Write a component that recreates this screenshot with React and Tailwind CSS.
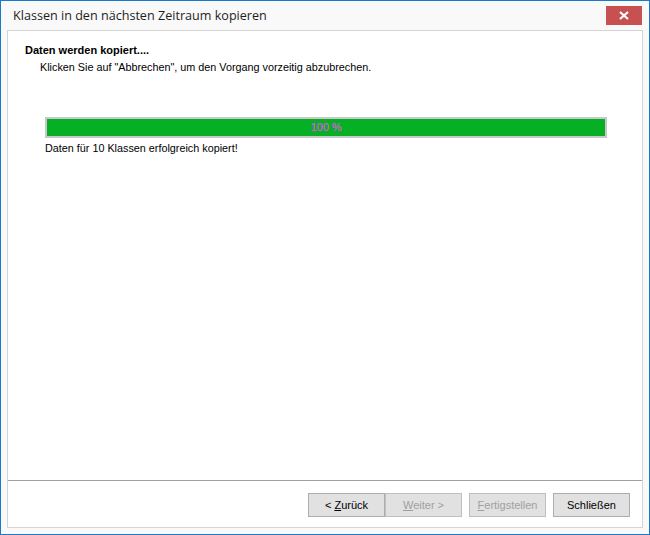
import React from "react";

const body = { fontFamily: '"Liberation Sans", Arial, sans-serif' };
const title = { fontFamily: '"Open Sans", "Noto Sans", sans-serif' };

function Btn({ children, disabled }) {
  return (
    <div
      className={`w-[77px] h-[24px] flex items-center justify-center border text-[11px] ${
        disabled ? "border-[#bfbfbf] text-[#a0a0a0]" : "border-[#adadad] text-[#000]"
      } bg-[#e1e1e1]`}
      style={body}
    >
      <span className="whitespace-pre">{children}</span>
    </div>
  );
}

export default function App() {
  return (
    <div className="w-[650px] h-[535px] border border-[#1979ca] bg-[#f9f9f9] flex flex-col">
      <div className="h-[29px] flex items-start justify-between pl-[12px] pr-[7px]">
        <div className="text-[12.6px] text-[#1e1e1e] mt-[5px] leading-[20px]" style={title}>
          Klassen in den nächsten Zeitraum kopieren
        </div>
        <div className="mt-[5px] w-[36px] h-[19px] bg-[#c75050] flex items-center justify-center">
          <svg width="10" height="9" viewBox="0 0 10 9">
            <path d="M1 1 L9 8 M9 1 L1 8" stroke="#fff" strokeWidth="2.2" />
          </svg>
        </div>
      </div>
      <div className="mx-[6px] mb-[6px] flex-1 border border-[#d4d4d4] bg-white flex flex-col" style={body}>
        <div className="flex-1 flex flex-col">
          <div className="pl-[17px] pt-[12px] text-[11px] leading-[14px] font-bold text-black">
            Daten werden kopiert....
          </div>
          <div className="pl-[32px] pt-[3px] text-[10.8px] leading-[14px] text-black">
            Klicken Sie auf "Abbrechen", um den Vorgang vorzeitig abzubrechen.
          </div>
          <div className="ml-[37px] mt-[43px] w-[562px] h-[21px] border-[2px] border-[#c9c9c9] bg-[#06b025] flex items-center justify-center">
            <span className="text-[11px] text-[#ff44ff] leading-none">100 %</span>
          </div>
          <div className="pl-[37px] pt-[3px] text-[10.8px] leading-[14px] text-black">
            Daten für 10 Klassen erfolgreich kopiert!
          </div>
        </div>
        <div className="h-[2px] border-t border-[#a0a0a0] bg-white" />
        <div className="h-[45px] flex items-start pt-[11px] pl-[300px]">
          <Btn>
            {"< "}
            <span className="underline">Z</span>urück
          </Btn>
          <Btn disabled>
            <span className="underline">W</span>eiter {">"}
          </Btn>
          <div className="w-[7px]" />
          <Btn disabled>
            <span className="underline">F</span>ertigstellen
          </Btn>
          <div className="w-[7px]" />
          <Btn>Schließen</Btn>
        </div>
      </div>
    </div>
  );
}
